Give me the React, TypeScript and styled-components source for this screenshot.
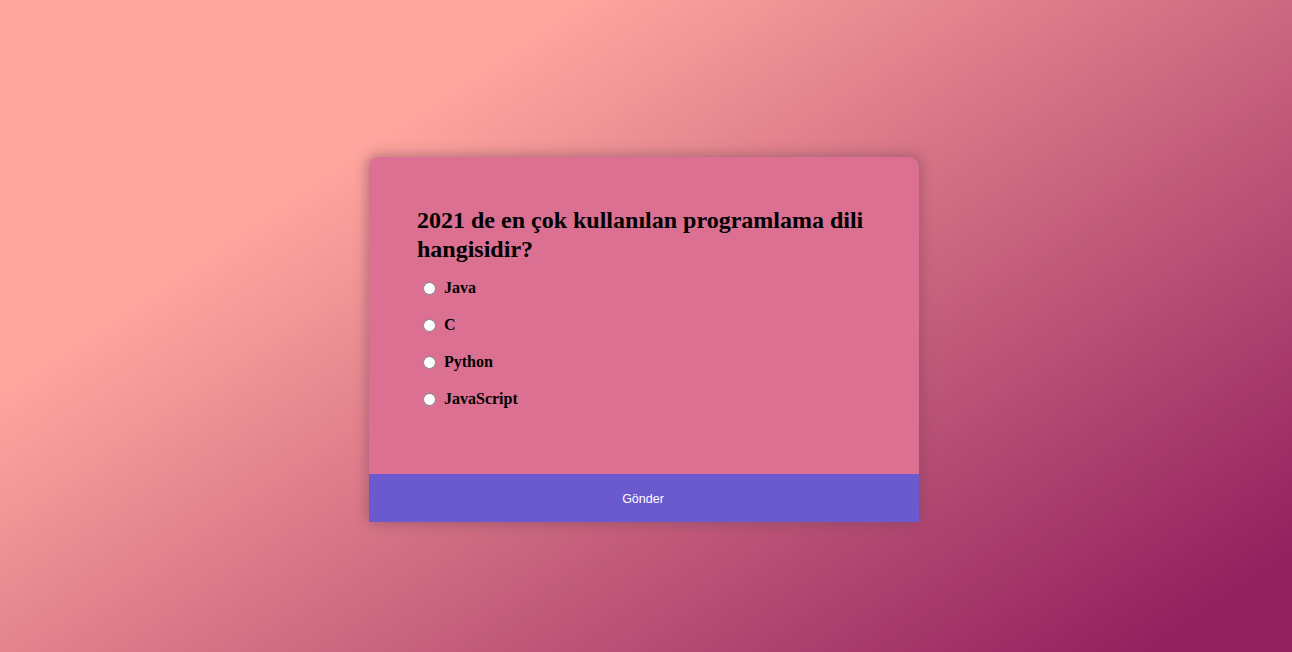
import React, { useState } from "react";
import styled, { createGlobalStyle } from "styled-components";

const GlobalStyle = createGlobalStyle`
  html, body {
    margin: 0;
    padding: 0;
  }
  body {
    font-family: "Liberation Serif", "Times New Roman", serif;
  }
  * {
    box-sizing: border-box;
  }
`;

const quizData = [
  {
    question: "2021 de en çok kullanılan programlama dili hangisidir?",
    a: "Java",
    b: "C",
    c: "Python",
    d: "JavaScript",
    correct: "d",
  },
];

const Page = styled.div`
  min-height: 100vh;
  display: flex;
  justify-content: center;
  align-items: flex-start;
  padding: 157px 4px 0 0;
  background-color: #93215f;
  background-image: linear-gradient(326deg, #93215f 6.5%, #ffa69e 74.5%);
`;

const QuizCard = styled.div`
  width: 550px;
  background-color: #db7093;
  border-radius: 10px;
  box-shadow: 0 0 12px 3px rgba(120, 70, 90, 0.45);
`;

const QuizBody = styled.div`
  padding: 49px 48px 57px;
`;

const Question = styled.h2`
  margin: 0 0 5px;
  font-size: 24px;
  font-weight: bold;
  color: #000;
  line-height: 29px;
`;

const AnswerList = styled.ul`
  list-style: none;
  margin: 0;
  padding: 0;
`;

const AnswerRow = styled.li`
  height: 37px;
  display: flex;
  align-items: center;
`;

const Radio = styled.input`
  width: 13px;
  height: 13px;
  margin: 2px 8px 0 6px;
`;

const AnswerLabel = styled.label`
  font-size: 16px;
  font-weight: bold;
  color: #000;
`;

const SubmitButton = styled.button`
  display: block;
  width: 100%;
  height: 48px;
  border: none;
  background-color: #6a5acd;
  color: #fff;
  font-family: "Liberation Sans", Arial, sans-serif;
  font-size: 12.5px;
  cursor: pointer;
  padding: 2px 2px 0 0;
`;

export default function App() {
  const [current] = useState(0);
  const [answer, setAnswer] = useState<string | null>(null);
  const q = quizData[current];
  const keys: ("a" | "b" | "c" | "d")[] = ["a", "b", "c", "d"];

  return (
    <>
      <GlobalStyle />
      <Page>
        <QuizCard>
          <QuizBody>
            <Question>{q.question}</Question>
            <AnswerList>
              {keys.map((k) => (
                <AnswerRow key={k}>
                  <Radio
                    type="radio"
                    name="answer"
                    id={k}
                    checked={answer === k}
                    onChange={() => setAnswer(k)}
                  />
                  <AnswerLabel htmlFor={k}>{q[k]}</AnswerLabel>
                </AnswerRow>
              ))}
            </AnswerList>
          </QuizBody>
          <SubmitButton>Gönder</SubmitButton>
        </QuizCard>
      </Page>
    </>
  );
}
